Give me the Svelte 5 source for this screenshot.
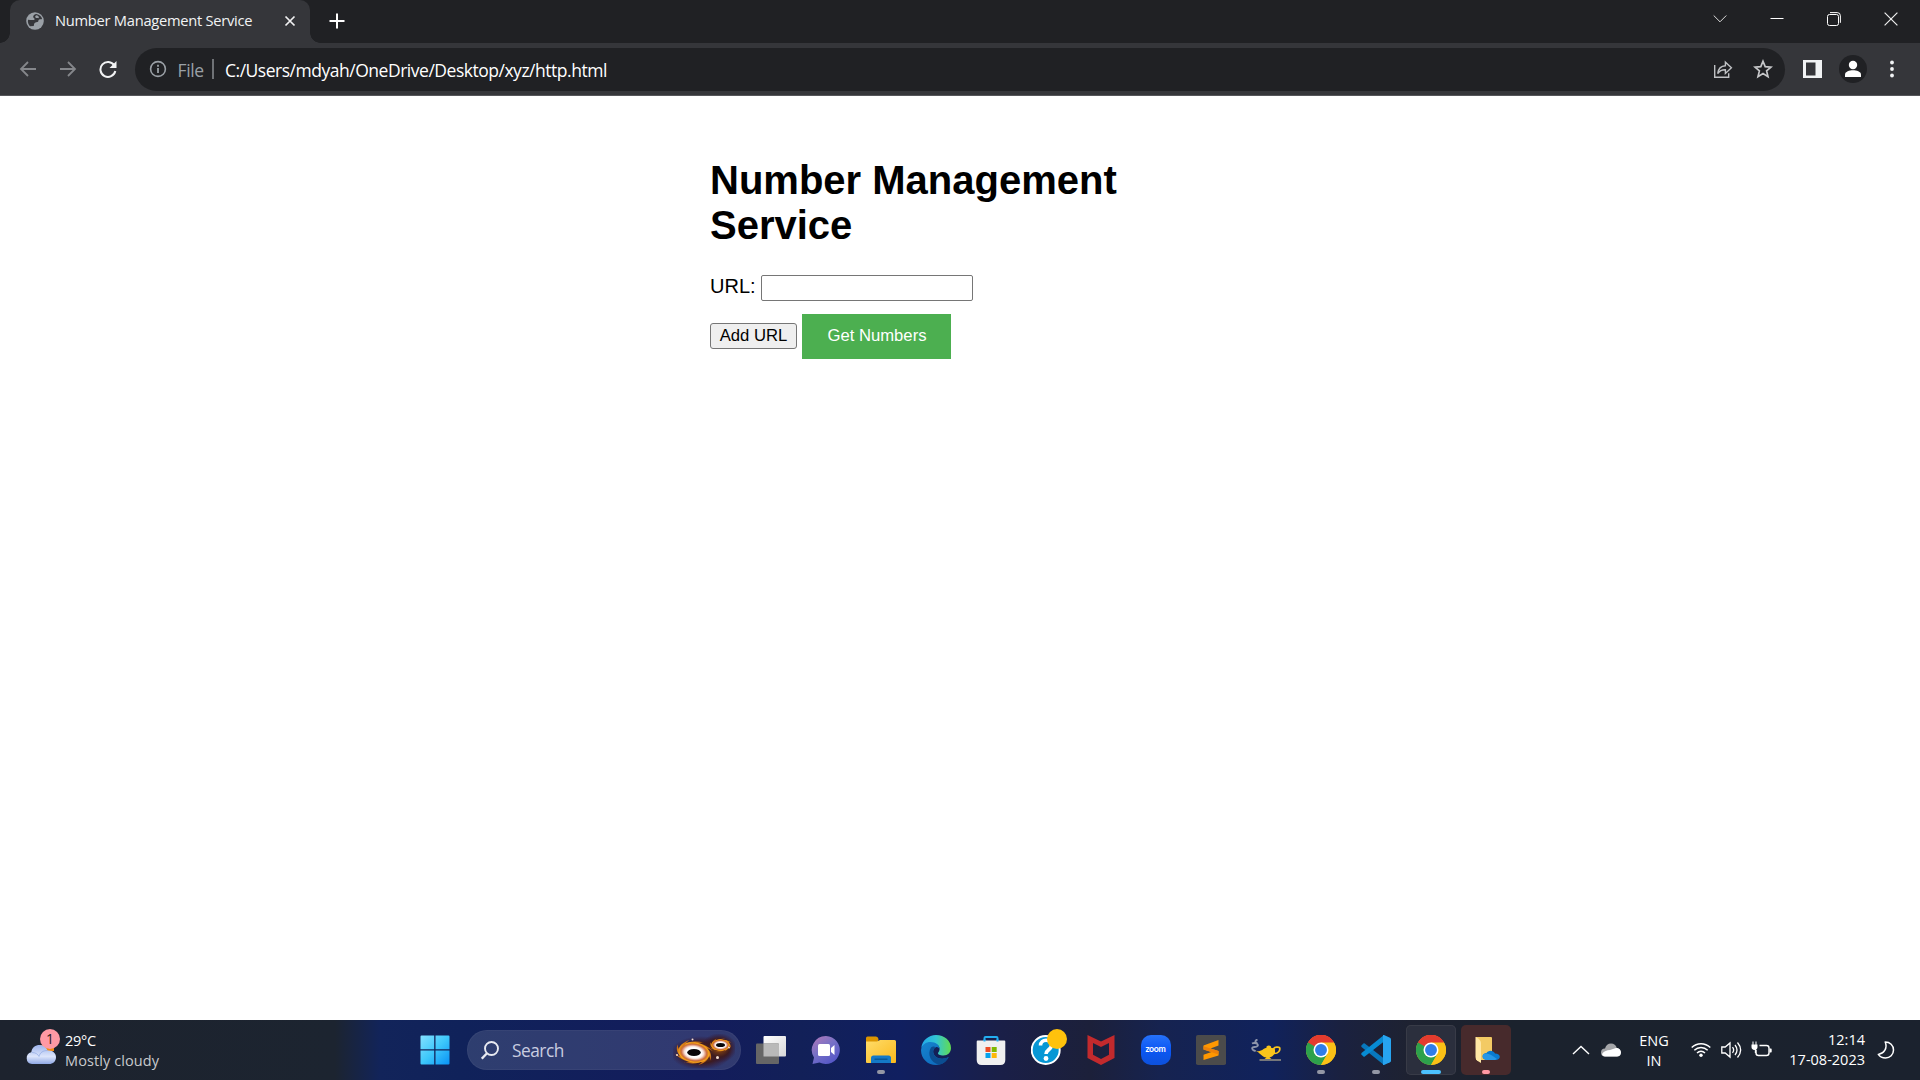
<script>
  const tasks = [
    { icon: 'taskview' }, { icon: 'chat' }, { icon: 'explorer', mark: 'idle' }, { icon: 'edge' },
    { icon: 'store' }, { icon: 'help' }, { icon: 'mcafee' }, { icon: 'zoom' }, { icon: 'sublime' },
    { icon: 'lamp' }, { icon: 'chrome', mark: 'idle' }, { icon: 'vscode', mark: 'idle' },
    { icon: 'chrome', mark: 'active', box: 'lit' }, { icon: 'folder', mark: 'alert', box: 'warn' }
  ];
  // Angles of the spiral arms round each galaxy disc
  const arms = [0, 45, 90, 135, 180, 225, 270, 315];
  let url = $state('');
</script>

{#snippet chrome()}
  <svg width="30" height="30" viewBox="0 0 48 48">
    <circle cx="24" cy="24" r="24" fill="#fbc116" />
    <path d="M24 24 3.2 12A24 24 0 0 1 44.8 12Z" fill="#e33b2e" />
    <path d="M24 12H44.8A24 24 0 0 0 3.2 12L13.6 30Z" fill="#e33b2e" />
    <path d="M3.2 12A24 24 0 0 0 24 48L34.4 30 24 24Z" fill="#2da14c" />
    <path d="M24 48A24 24 0 0 0 44.8 12H24L34.4 30Z" fill="#fbc116" />
    <circle cx="24" cy="24" r="12" fill="#fff" />
    <circle cx="24" cy="24" r="9.5" fill="#2f7de9" />
  </svg>
{/snippet}

{#snippet swirl()}
  {#each arms as a}
    <path transform="rotate({a})" d="M-9 1C-9-6-3-11 5-10-1-9-5-5-5 1Z" fill="url(#arm)" />
  {/each}
  <circle r="8.5" fill="url(#disc)" />
{/snippet}

<div class="screen">
  <header class="tabs">
    <div class="tab">
      <svg class="globe" width="18" height="18" viewBox="0 0 18 18">
        <circle cx="9" cy="9" r="8.8" fill="#9aa0a6" />
        <path d="M10.500 2C8.500 2.200 7 3.500 7.200 5c.2 1.300 1.600 1 1.400 2.200C8.300 8.500 5.500 8 2 7.800c-.5 2.600.5 5 2 6.500l3.700-.3c.6-1.600 0-2.300 1.300-3.200 1.500-1 3.400-.3 3.400-2 0-1.200 1.200-1.500 2.600-1.500.6 0 1-.4 1-.9C15.400 4.500 13.500 2.500 10.500 2Z" fill="#35363a" />
        <path d="M10.500 3.300c-1.500.5-1.700 1.700-.8 2.400 1 .7 2-.2 3 .6.500-1.300 0-2.600-2.200-3Z" fill="#9aa0a6" />
      </svg>
      <span class="tab-title">Number Management Service</span>
      <svg class="tab-x" width="12" height="12" viewBox="0 0 12 12"><path d="m1.500 1.500 9 9m0-9-9 9" stroke="#f1f1f2" stroke-width="1.700" /></svg>
    </div>
    <svg class="plus" width="16" height="16" viewBox="0 0 16 16"><path d="M8 .5v15M.5 8h15" stroke="#fff" stroke-width="2" /></svg>
    <div class="window">
      <svg width="14" height="14" viewBox="0 0 14 14"><path d="m.7 3.500 6.300 6.300L13.300 3.500" fill="none" stroke="#ddd" /></svg>
      <svg width="14" height="14" viewBox="0 0 14 14"><path d="M.5 6.500h13" stroke="#fff" /></svg>
      <svg width="14" height="14" viewBox="0 0 14 14" fill="none" stroke="#fff"><rect x=".5" y="2.500" width="11" height="11" rx="2" /><path d="M3 .6h7.200q3.200 0 3.200 3.200v7" /></svg>
      <svg width="14" height="14" viewBox="0 0 14 14"><path d="m.6.6 12.800 12.800m0-12.800L.6 13.400" stroke="#eee" stroke-width="1.200" /></svg>
    </div>
  </header>

  <nav class="toolbar">
    <svg class="back" width="18" height="18" viewBox="0 0 18 18"><path d="M17 9H2m7-7L2 9l7 7" /></svg>
    <svg class="fwd" width="18" height="18" viewBox="0 0 18 18"><path d="M1 9h15M9 2l7 7-7 7" /></svg>
    <svg class="reload" width="18" height="18" viewBox="0 0 18 18"><path d="M15.300 5.400A7.500 7.500 0 1 0 16.300 11" fill="none" stroke="#f2f3f4" stroke-width="2" /><path d="M17.500 1v7h-7Z" fill="#f2f3f4" /></svg>
    <div class="omnibox">
      <svg class="info" width="18" height="18" viewBox="0 0 18 18"><circle cx="9" cy="9" r="7.400" fill="none" stroke="#9aa0a6" stroke-width="1.600" /><path d="M9 8v5M9 4.800v1.900" stroke="#9aa0a6" stroke-width="1.800" /></svg>
      <span class="scheme">File</span>
      <i class="rule"></i>
      <span class="address">C:/Users/mdyah/OneDrive/Desktop/xyz/http.html</span>
      <svg class="share" width="20" height="20" viewBox="0 0 20 20" fill="none" stroke="#bfc1c4" stroke-width="1.400"><path d="M1.700 6v12.200h14v-4" /><path d="M4.700 14.500c.6-5 3-7.500 7.700-7.800V3.200l6 5.600-6 5.600v-3.600c-3.600-.1-5.800 1-7.700 3.700Z" /></svg>
      <svg class="star" width="20" height="20" viewBox="0 0 20 20"><path d="m10 2.200 2.200 5.400 5.800.5-4.400 3.800 1.400 5.700-5-3.100-5 3.100 1.400-5.700L2 8.100l5.800-.5Z" fill="none" stroke="#c7c8ca" stroke-width="1.700" /></svg>
    </div>
    <svg class="panel" width="19" height="18" viewBox="0 0 19 18"><path d="M0 0h19v18H0ZM3 2.500v13h9.500v-13Z" fill="#f1f3f4" fill-rule="evenodd" /></svg>
    <svg class="avatar" width="28" height="28" viewBox="0 0 28 28"><circle cx="14" cy="14" r="14" fill="#202124" /><circle cx="14" cy="10" r="4.200" fill="#fff" /><path d="M6 22v-2.500c0-2.800 4.500-4.200 8-4.200s8 1.400 8 4.200V22Z" fill="#fff" /></svg>
    <svg class="dots" width="4" height="18" viewBox="0 0 4 18" fill="#f1f3f4"><circle cx="2" cy="2.500" r="1.900" /><circle cx="2" cy="9" r="1.900" /><circle cx="2" cy="15.500" r="1.900" /></svg>
  </nav>

  <main>
    <section>
      <h1>Number Management Service</h1>
      <div class="field"><label for="url">URL:</label><input id="url" type="text" bind:value={url} /></div>
      <div class="actions">
        <button class="add">Add URL</button>
        <button class="get">Get Numbers</button>
      </div>
    </section>
  </main>

  <footer>
    <div class="weather">
      <div class="cloud">
        <svg width="30" height="22" viewBox="0 0 30 22">
          <defs><linearGradient id="cl" x2="0" y2="1"><stop stop-color="#9db4ec" /><stop offset=".6" stop-color="#dce5fb" /><stop offset="1" stop-color="#8fa8e4" /></linearGradient></defs>
          <path d="M14 2h14v6H14Z" fill="#f28a12" />
          <path d="M6 21a6 6 0 0 1-.7-11.800C6 4.500 9.500 2 13.500 2s6.700 2 8 5.500C26.500 7 30 10 30 14.200S27 21 23 21Z" fill="url(#cl)" />
          <path d="M6 9.500c4 0 6 2 7 4 1-4 4-6 8.500-6" fill="none" stroke="#90a9e2" stroke-opacity=".7" />
        </svg>
        <b>1</b>
      </div>
      <div class="conditions"><span class="deg">29°C</span><span class="sky">Mostly cloudy</span></div>
    </div>

    <svg class="start" width="30" height="30" viewBox="0 0 30 30">
      <defs><linearGradient id="win" x2="1" y2="1"><stop stop-color="#84e0ff" /><stop offset=".5" stop-color="#3ec8fb" /><stop offset="1" stop-color="#0992f5" /></linearGradient></defs>
      <path d="M.5 1.500q0-1 1-1h12.700v13.700H.5ZM15.500.5h13q1 0 1 1v12.700h-14ZM.5 15.500h13.700v14H1.500q-1 0-1-1ZM15.500 15.500h14v13q0 1-1 1h-13Z" fill="url(#win)" />
    </svg>

    <div class="search">
      <svg class="lens" width="18" height="19" viewBox="0 0 18 19" fill="none" stroke="#e8eaf1" stroke-width="1.900"><circle cx="10.500" cy="7.500" r="6.500" /><path d="m6 12.300-5.200 5.400" stroke-width="2.300" /></svg>
      <span>Search</span>
      <svg class="galaxy" width="62" height="34" viewBox="0 0 62 34">
        <defs>
          <radialGradient id="halo"><stop stop-color="#9a4d0c" /><stop offset=".6" stop-color="#3d1b20" /><stop offset="1" stop-color="#30163a" stop-opacity="0" /></radialGradient>
          <radialGradient id="disc"><stop offset=".5" stop-color="#fff" /><stop offset=".64" stop-color="#f8e2da" /><stop offset=".85" stop-color="#cf6f45" /><stop offset="1" stop-color="#b95712" stop-opacity="0" /></radialGradient>
          <linearGradient id="arm"><stop stop-color="#f7a51e" /><stop offset="1" stop-color="#c06312" /></linearGradient>
        </defs>
        <ellipse cx="28" cy="19" rx="31" ry="17" fill="url(#halo)" /><ellipse cx="46" cy="14" rx="18" ry="15" fill="url(#halo)" />
        <g transform="translate(21 18.500) rotate(8) scale(1.750 1.120)">{@render swirl()}</g>
        <g transform="translate(47.500 11) scale(1.020 .62)">{@render swirl()}</g>
        <ellipse cx="21" cy="18.500" rx="6.800" ry="3.500" fill="#080608" />
        <ellipse cx="47.500" cy="11" rx="4.500" ry="2" fill="#080608" />
        <g fill="#f7dfd0"><circle cx="19.500" cy="5.500" r="1" /><circle cx="4" cy="21" r="1" /><circle cx="44.500" cy="23.500" r="1.500" /><circle cx="56" cy="13.500" r="1" /></g>
      </svg>
    </div>

    <div class="tasks">
      {#each tasks as t}
        <div class="task">
          <div class={['tile', t.box]}>
            {#if t.icon === 'taskview'}
              <svg width="30" height="28" viewBox="0 0 30 28"><defs><linearGradient id="tv" x2="1" y2="1"><stop stop-color="#fff" /><stop offset="1" stop-color="#d7d7d8" /></linearGradient></defs><rect x="7.500" width="22.500" height="20.500" rx="1" fill="url(#tv)" /><rect y="7.500" width="23" height="20.500" rx="1" fill="#666" /><path d="M7.500 7.500H22q1 0 1 1v12H7.500Z" fill="#b9b9b9" /></svg>
            {:else if t.icon === 'chat'}
              <svg width="30" height="30" viewBox="0 0 30 30"><defs><linearGradient id="ch" x2=".7" y2="1"><stop stop-color="#b477b7" /><stop offset=".5" stop-color="#7771c6" /><stop offset="1" stop-color="#5456c7" /></linearGradient></defs><path d="M15 1a14 14 0 1 1-6.500 26.500L1.500 29 3 22.500A14 14 0 0 1 15 1Z" fill="url(#ch)" /><rect x="7" y="9" width="12" height="12" rx="1.500" fill="#fff" /><path d="m20 13 3.500-3v10L20 17Z" fill="#fff" /></svg>
            {:else if t.icon === 'explorer'}
              <svg width="30" height="28" viewBox="0 0 30 28"><defs><linearGradient id="ex" x2="1" y2="1"><stop stop-color="#ffdc6a" /><stop offset="1" stop-color="#fbb91b" /></linearGradient></defs><path d="M0 2q0-1.500 1.500-1.500H10Q12 .5 12.500 3L12 7H0Z" fill="#dc9500" /><path d="M0 5.500h11L14 4h14.500Q30 4 30 5.500V26q0 1-1 1H1q-1 0-1-1Z" fill="url(#ex)" /><path d="M5 27v-5q0-2.500 2.500-2.500h15q2.500 0 2.500 2.500v5Z" fill="#1479c7" /><path d="M8.500 23.200h13" stroke="#075490" stroke-width="1.300" /></svg>
            {:else if t.icon === 'edge'}
              <svg width="30" height="30" viewBox="0 0 30 30"><defs><linearGradient id="e1"><stop stop-color="#22a7e9" /><stop offset=".5" stop-color="#32c5d4" /><stop offset="1" stop-color="#62db50" /></linearGradient><linearGradient id="e2" x2="1" y2="1"><stop stop-color="#1684ce" /><stop offset="1" stop-color="#0c65ba" /></linearGradient></defs><path d="M.3 13C1 5.500 7.500 0 15 0c8.500 0 15 5.800 15 13 0 4.500-3.200 7.500-7.500 7.500-4 0-5.500-1.300-5.500-2.300 0-1 1.600-1.700 1.600-4.200C18.600 10.500 15 8 10.500 8 5.500 8 2 10.500.3 13Z" fill="url(#e1)" /><path d="M.1 14.500C.8 9.500 5 7 9.500 7c5.400 0 9 3.200 9.100 7-1-1.500-2.300-2.300-3.700-1.800-3.300 1.200-3.800 6.300-.4 9.300 3.200 2.800 8.700 2.900 13.200.6C25.200 27 20.600 30 15 30 6.500 30-.6 22.800.1 14.500Z" fill="url(#e2)" /><path d="M10 12.500c-4 6.500-.5 15.500 8.500 17.200 4-.7 7.300-3.500 9.200-7.600-4.500 2.300-10 2.200-13.200-.6-3.400-3-2.900-8.100.4-9.300-1.700-1.200-3.700-1-4.900.3Z" fill="#0b4d91" /></svg>
            {:else if t.icon === 'store'}
              <svg width="30" height="30" viewBox="0 0 30 30"><path d="M8.500 7V3q0-1 1-1h11q1 0 1 1v4" fill="none" stroke="#23aef1" stroke-width="2" /><path d="M.7 6.500q0-1 1-1h26.600q1 0 1 1V25q0 5-5 5H5.700q-5 0-5-5Z" fill="#f0f0f0" /><path d="M8.500 4.500v2m13-2v2" stroke="#23aef1" stroke-width="2" /><path d="M9.500 12h5v5h-5Z" fill="#ed4c25" /><path d="M15.700 12h5v5h-5Z" fill="#80b900" /><path d="M9.500 18h5v5h-5Z" fill="#06a2ec" /><path d="M15.700 18h5v5h-5Z" fill="#fdb809" /></svg>
            {:else if t.icon === 'help'}
              <svg width="30" height="30" viewBox="0 0 30 30"><circle cx="14.700" cy="15" r="14" fill="#0797d5" stroke="#fff" stroke-width="2" /><path d="M9.500 10.500c0-7 11-7 11-.5 0 5-5.500 4.500-5.500 9" fill="none" stroke="#fff" stroke-width="3.600" /><circle cx="15" cy="23.500" r="2.400" fill="#fff" /></svg>
              <i class="dot"></i>
            {:else if t.icon === 'mcafee'}
              <svg width="28" height="30" viewBox="0 0 28 30"><path d="M.5 0 14 6.500 27.500 0v23L14 30 .5 23ZM6 8v11.700l8 4.300 8-4.300V8l-8 4Z" fill="#c22a2d" fill-rule="evenodd" /></svg>
            {:else if t.icon === 'zoom'}
              <div class="zoom">zoom</div>
            {:else if t.icon === 'sublime'}
              <svg width="30" height="30" viewBox="0 0 30 30"><rect width="30" height="30" rx="1.800" fill="#4b4b4b" /><path d="M7.500 10.500 22.500 5v5.500l-8 3 8 2.600v4.400L7.500 25v-5.300l8-2.700-8-2.500Z" fill="#ff9800" /><path d="m7.500 14.500 15 5v-3.400l-15-4.800Z" fill="#ed8109" /></svg>
            {:else if t.icon === 'lamp'}
              <svg width="30" height="22" viewBox="0 0 30 22">
                <path d="M6.500.5C3.500 1.500 4 4 6.500 4.500M1 4.500C4 3 8 5 6.500 7S1 7 1.200 9.500 4 11 4.500 12.500" fill="none" stroke="#8f96ab" stroke-width="1.900" />
                <path d="M4 11.500c3.500 1.500 6 .5 8.500-1.500 1-.8 2-1 3-1.200V7.500q2.300-2 4.500 0v1.300c2 .3 3.500 1 4 2.200.5 4-2 6.500-5.500 7.500l2 1.500h-7l2-1.500c-5-.5-6.500-5-11.500-7Z" fill="#f9c41b" />
                <path d="M22.800 9.500c1-1.600 4.800-1.800 5.800-.8 1 3-1.600 5.800-5.300 5.800Z" fill="none" stroke="#f9c41b" stroke-width="1.700" />
                <path d="M8.500 21H30" stroke="#d9cb9a" stroke-width="1" />
              </svg>
            {:else if t.icon === 'chrome'}
              {@render chrome()}
            {:else if t.icon === 'vscode'}
              <svg width="30" height="30" viewBox="0 0 30 30"><path d="m.4 10.500 2-2q.7-.5 1.400 0L23 23.500V30L.5 12Q0 11.300.4 10.500Z" fill="#0878bd" /><path d="m.4 19.500 2 2q.7.5 1.400 0L23 6.500V0L.5 18Q0 18.700.4 19.500Z" fill="#078bd3" /><path d="M22 0h1l6 2.700q1 .5 1 1.600v21.400q0 1.100-1 1.600L23 30h-1Z" fill="#27a4f0" /></svg>
            {:else}
              <svg class="folder" width="26" height="28" viewBox="0 0 26 28"><path d="M2 1h15q1 0 1 1v22H2Z" fill="#f3ca64" /><path d="M2 1q5 3 5 6v20L3 24.500Q1.500 23 1.500 21V1Z" fill="#ffe6a4" /><path d="M13.500 24c-3 0-5-1.500-5-3.500s1.800-3.300 4-3.500C14 14 19 13.500 21 17.500c3 0 4.800 1.500 4.800 3.300s-1.500 3.200-4.300 3.200Z" fill="#087ad1" /><path d="M9 18.500c4-2.500 8 0 14 4.500l-2 1h-8c-3 0-5-2.500-4-5.500Z" fill="#2797e6" /></svg>
            {/if}
            {#if t.mark}<i class={['mark', t.mark]}></i>{/if}
          </div>
        </div>
      {/each}
    </div>

    <div class="tray">
      <svg class="up" width="18" height="10" viewBox="0 0 18 10"><path d="m1 9 8-7.500L17 9" fill="none" stroke="#fff" stroke-width="1.400" /></svg>
      <svg class="drive" width="20" height="14" viewBox="0 0 20 14"><path d="M4 13.500a4 4 0 0 1 0-8C5 2 7 .5 10 .5s5 1.600 5.800 4.500A4.300 4.300 0 0 1 16 13.500Z" fill="#a5a6a9" /><path d="M1 11c2-3 5-4 8-4l6-2c3 0 5 2 5 4.500s-1.500 4-4 4H4c-1.500 0-2.700-1-3-2.500Z" fill="#fff" /></svg>
      <div class="lang"><span>ENG</span><span>IN</span></div>
      <svg class="wifi" width="20" height="16" viewBox="0 0 20 16" fill="none" stroke="#fff" stroke-width="1.400"><path d="M.7 5.600c5.300-5.200 13.300-5.200 18.600 0M3.300 8.300c3.800-3.800 9.600-3.800 13.400 0M6 11c2.300-2.300 5.700-2.300 8 0" /><circle cx="10" cy="13.300" r="1.700" fill="#fff" stroke="none" /></svg>
      <svg class="sound" width="21" height="18" viewBox="0 0 21 18" fill="none" stroke="#fff" stroke-width="1.300"><path d="M.8 6h3.400L9 2v14l-4.800-4H.8ZM11.500 6.200q2.300 2.800 0 5.600M14 4q4 5 0 10M16.500 1.500q6.300 7.500 0 15" /></svg>
      <svg class="power" width="21" height="18" viewBox="0 0 21 18"><path d="M8.500 4.500h7q2.500 0 2.500 2.500v5q0 2.500-2.500 2.500h-8q-2.500 0-2.500-2.500V9" fill="none" stroke="#fff" stroke-width="1.400" /><path d="M18.500 7.500H20q.7 0 .7 1v2q0 1-.7 1h-1.500ZM1.500.5h1v3h2v-3h1v3h1V6q0 2.700-3 3Q.5 8.700.5 6V3.500h1Z" fill="#fff" /><path d="M4.500 8v4" stroke="#fff" stroke-width="1.400" /></svg>
      <div class="clock"><span>12:14</span><span>17-08-2023</span></div>
      <svg class="moon" width="18" height="18" viewBox="0 0 18 18"><path d="M8.200 1C13 1 16.500 4.400 16.500 9S13 17 8.500 17C5.500 17 3 15.800 1.300 13.400 6.500 12.500 11 7.500 8.200 1Z" fill="none" stroke="#fff" stroke-width="1.500" stroke-linejoin="round" /></svg>
    </div>
  </footer>
</div>

<style>
  :global(body) { margin: 0; overflow: hidden; }
  .screen { width: 1920px; height: 1080px; display: flex; flex-direction: column; background: #fff; font-family: 'Open Sans', 'Noto Sans', sans-serif; }
  .screen * { box-sizing: border-box; }
  svg { display: block; flex: none; }
  span { white-space: nowrap; }

  .tabs { height: 43px; flex: none; background: #202124; display: flex; padding-left: 10px; }
  .tab { width: 300px; height: 43px; background: #35363a; border-radius: 10px 10px 0 0; display: flex; align-items: center; padding: 0 14px 1px 16px; position: relative; color: #f1f3f4; }
  .tab::before, .tab::after { content: ''; position: absolute; bottom: 0; width: 10px; height: 10px; }
  .tab::before { left: -10px; background: radial-gradient(circle at 0 0, #202124 9.5px, #35363a 10px); }
  .tab::after { right: -10px; background: radial-gradient(circle at 100% 0, #202124 9.5px, #35363a 10px); }
  .tab-title { margin: 0 0 2px 11px; font-size: 14.700px; letter-spacing: -0.270px; line-height: 20px; }
  .tab-x { margin-left: auto; }
  .plus { margin: 13px 0 0 19px; }
  .window { margin-left: auto; display: flex; gap: 43px; padding: 12px 22px 0 0; }

  .toolbar { height: 53px; flex: none; background: #35363a; border-bottom: 1px solid #55565a; display: flex; align-items: center; padding: 0 0 0 18.500px; }
  .back, .fwd { fill: none; stroke: #85878b; stroke-width: 1.800; }
  .fwd { margin-left: 22px; }
  .reload { margin-left: 22px; }
  .omnibox { width: 1650px; height: 43px; margin-left: 18.500px; border-radius: 22px; background: #202124; display: flex; align-items: center; padding: 0 12px 0 13.500px; font-size: 17.500px; line-height: 24px; }
  .scheme { margin: 1px 0 0 11px; width: 27px; color: #9aa0a6; letter-spacing: -0.400px; }
  .rule { width: 2px; height: 20px; margin-left: 7.500px; background: #6f7276; }
  .address { margin: 1px 0 0 11px; color: #fff; letter-spacing: -0.480px; }
  .share { margin-left: auto; }
  .star { margin-left: 20px; }
  .panel { margin-left: 18px; }
  .avatar { margin-left: 17px; }
  .dots { margin-left: 23px; }

  main { flex: 1; font-family: 'Liberation Sans', Arial, sans-serif; color: #000; }
  section { width: 500px; margin: 0 auto; padding: 62px 0 0; }
  h1 { margin: 0; font-size: 40px; line-height: 45px; font-weight: 700; }
  .field { display: flex; margin-top: 27px; font-size: 20px; line-height: 23px; }
  input { width: 212px; height: 26px; margin: 0 0 0 5px; border: 1px solid #767676; border-radius: 2px; padding: 1px 2px; font: 16.670px 'Liberation Sans', sans-serif; outline: none; }
  .actions { display: flex; align-items: center; gap: 5px; margin-top: 13px; }
  button { font: 16.670px 'Liberation Sans', Arial, sans-serif; margin: 0; white-space: nowrap; }
  .add { width: 87px; height: 26px; margin-bottom: 2px; padding: 0; border: 1px solid #767676; border-radius: 3px; background: #efefef; color: #000; }
  .get { width: 149px; height: 45px; padding: 0 0 2px 1px; border: 0; background: #4caf50; color: #fff; }

  footer { height: 60px; flex: none; display: flex; align-items: center; color: #fff; font-size: 14.500px; line-height: 20px;
    background: linear-gradient(90deg, #1d232e 0, #1c2430 335px, #12245a 380px, #10225a 460px, #131c5c 700px, #122058 800px, #101f60 900px, #1a1f48 1000px, #1c203a 1090px, #162350 1160px, #10225c 1270px, #1a2140 1340px, #1e2231 1410px, #1b222d 1500px, #1b222e 1920px); }
  .weather { width: 393px; display: flex; padding-left: 26px; }
  .cloud { width: 30px; height: 40px; padding-top: 13px; position: relative; }
  .cloud b { position: absolute; left: 14px; top: -1px; width: 20px; height: 20px; border-radius: 50%; background: #ff99a4; color: #2a1b1e; font-weight: 400; font-size: 14px; text-align: center; }
  .conditions, .lang, .clock { display: flex; flex-direction: column; padding-top: 1px; }
  .conditions { margin-left: 9px; }
  .deg { letter-spacing: -0.300px; }
  .sky { color: #c8cacd; letter-spacing: 0.100px; }
  .start { margin-left: 27px; }
  .search { width: 274px; height: 40px; margin-left: 17px; border-radius: 20px; background: rgba(255, 255, 255, 0.130); border: 1px solid rgba(255, 255, 255, 0.040); display: flex; align-items: center; padding: 1px 5px 0 13px; font-size: 17.300px; color: #c9cde0; }
  .search span { margin: 1px 0 0 13px; letter-spacing: -0.480px; }
  .galaxy { margin-left: auto; }
  .tasks { display: grid; grid-template-columns: repeat(14, 55px); margin-left: 2px; }
  .task { display: grid; place-items: center; }
  .tile { width: 50px; height: 50px; position: relative; display: grid; place-items: center; border-radius: 5px; }
  .lit { background: #2b2f3d; box-shadow: inset 0 0 0 1px #383b47; }
  .warn { background: #472a2c; }
  .folder { margin-left: 3px; }
  .mark { position: absolute; bottom: 1px; left: 21px; width: 8px; height: 4px; border-radius: 2px; background: #9397a5; }
  .active { left: 15px; width: 20px; background: #4cc2ff; }
  .alert { background: #ff99a4; }
  .dot { position: absolute; left: 26px; top: 4px; width: 20px; height: 20px; border-radius: 50%; background: #ffc20c; }
  .zoom { width: 30px; height: 30px; border-radius: 10px; background: linear-gradient(#2672fa, #0b57f4 50%, #0d51dc); font: 700 8.700px/28px Lato, sans-serif; text-align: center; letter-spacing: -0.300px; }

  .tray { margin-left: auto; display: flex; align-items: center; }
  .drive { margin-left: 11px; }
  .lang { margin-left: 18px; width: 30px; text-align: center; align-items: center; }
  .wifi { margin-left: 22px; }
  .sound { margin-left: 10px; }
  .power { margin-left: 9px; }
  .clock { margin-left: 17px; padding-top: 0; width: 76px; align-items: flex-end; }
  .moon { margin: 0 25px 0 12px; }
</style>
